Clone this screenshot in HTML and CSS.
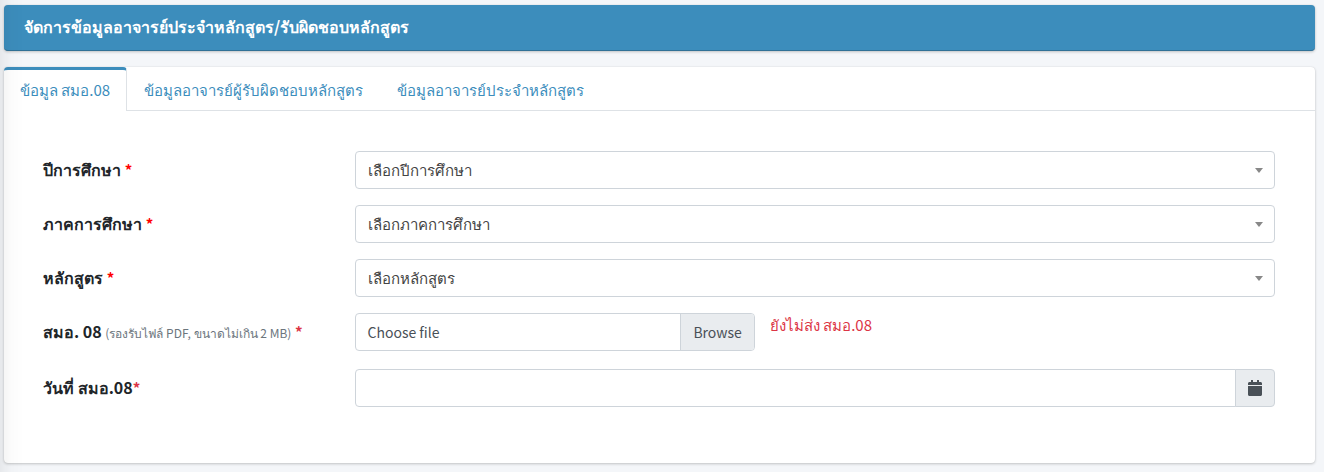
FILE: index.html
```html
<!DOCTYPE html>
<html lang="th">
<head>
	<meta charset="UTF-8">
	<title>จัดการข้อมูลอาจารย์ประจำหลักสูตร</title>
	<link rel="stylesheet" href="styles.css">
</head>
<body>
	<div class="wrapper">
		<header class="page-head">
			<h1>จัดการข้อมูลอาจารย์ประจำหลักสูตร/รับผิดชอบหลักสูตร</h1>
		</header>

		<main class="card">
			<nav class="tabs">
				<a href="#smo08" class="tab active">ข้อมูล สมอ.08</a>
				<a href="#owner" class="tab">ข้อมูลอาจารย์ผู้รับผิดชอบหลักสูตร</a>
				<a href="#teacher" class="tab">ข้อมูลอาจารย์ประจำหลักสูตร</a>
			</nav>

			<form class="card-body" id="smo08">
				<div class="row">
					<label class="col-label" for="year">ปีการศึกษา <span class="red">*</span></label>
					<div class="col-field">
						<select id="year" class="control">
							<option>เลือกปีการศึกษา</option>
						</select>
					</div>
				</div>
				<div class="row">
					<label class="col-label" for="term">ภาคการศึกษา <span class="red">*</span></label>
					<div class="col-field">
						<select id="term" class="control">
							<option>เลือกภาคการศึกษา</option>
						</select>
					</div>
				</div>
				<div class="row">
					<label class="col-label" for="course">หลักสูตร <span class="red">*</span></label>
					<div class="col-field">
						<select id="course" class="control">
							<option>เลือกหลักสูตร</option>
						</select>
					</div>
				</div>
				<div class="row row-file">
					<label class="col-label" for="file">สมอ. 08 <small>(รองรับไฟล์ PDF, ขนาดไม่เกิน 2 MB)</small> <span class="danger">*</span></label>
					<div class="col-file">
						<div class="custom-file">
							<input type="file" id="file" accept="application/pdf">
							<label class="file-label" for="file"><span class="file-name">Choose file</span><span class="browse">Browse</span></label>
						</div>
					</div>
					<div class="col-status danger">ยังไม่ส่ง สมอ.08</div>
				</div>
				<div class="row">
					<label class="col-label" for="date">วันที่ สมอ.08<span class="danger">*</span></label>
					<div class="col-field date-group">
						<input type="text" id="date" class="control">
						<button type="button" class="addon" aria-label="เลือกวันที่">
							<svg viewBox="0 0 448 512" width="14" height="16"><path fill="currentColor" d="M12 192h424c6.600 0 12 5.400 12 12v260c0 26.500-21.500 48-48 48H48c-26.500 0-48-21.500-48-48V204c0-6.600 5.400-12 12-12zm436-44v-36c0-26.500-21.500-48-48-48h-48V12c0-6.600-5.400-12-12-12h-40c-6.600 0-12 5.400-12 12v52H160V12c0-6.600-5.400-12-12-12h-40c-6.600 0-12 5.400-12 12v52H48C21.500 64 0 85.500 0 112v36c0 6.600 5.400 12 12 12h424c6.600 0 12-5.400 12-12z"/></svg>
						</button>
					</div>
				</div>
			</form>
		</main>
	</div>
</body>
</html>
```

FILE: styles.css
```css
* {box-sizing: border-box;}
body {margin: 0;background: #f4f6f9;color: #212529;font: 15px/24px "Noto Sans CJK SC", "Noto Sans", sans-serif;}
.wrapper {padding: 5px 9px 8px 4px;}
.wrapper::before {content: "";position: fixed;left: 0;top: 0;bottom: 0;width: 24px;background: linear-gradient(to right, rgba(0,0,0,.05), rgba(0,0,0,.01) 50%, rgba(0,0,0,0));pointer-events: none;z-index: 1;}

.page-head {background: #3c8dbc;color: #fff;border-bottom: 1px solid #307196;border-radius: 4px;box-shadow: 0 0 1px rgba(0,0,0,.13), 0 1px 3px rgba(0,0,0,.2);padding: 9px 20px 12px;margin-bottom: 16px;}
.page-head h1 {margin: 0;font-size: 16px;line-height: 24px;font-weight: 700;}

.card {background: #fff;border-radius: 4px;box-shadow: 0 0 1px rgba(0,0,0,.13), 0 1px 3px rgba(0,0,0,.2);}
.tabs {display: flex;border-bottom: 1px solid #dee2e6;}
.tab {color: #3c8dbc;text-decoration: none;padding: 8px 16px;border: 1px solid transparent;border-top-width: 3px;border-bottom: 0;margin-bottom: -1px;height: 44px;}
.tab.active {background: #fff;border-color: #3c8dbc #dee2e6 #fff transparent;border-left: 0;border-radius: 4px 4px 0 0;}

.card-body {padding: 40px 33px 56px 32px;}
.row {display: flex;margin-bottom: 16px;}
.row-file {margin-bottom: 18px;}
.row:last-child {margin-bottom: 0;}
.col-label {flex: 0 0 25%;padding: 6px 7px 0;font-size: 16px;font-weight: 700;}
.col-label small {font-size: 12px;font-weight: 400;color: #6c757d;}
.col-label span {font-size: 15px;}
.col-field {flex: 1;padding: 0 7px;}
.col-file {flex: 0 0 33.333%;padding: 0 8px 0 7px;}
.col-status {padding: 0 7px;}
.red {color: #f00;}
.danger {color: #dc3545;}

.control {display: block;width: 100%;height: 38px;padding: 6px 12px;border: 1px solid #ced4da;border-radius: 4px;background: #fff;color: #444;font: inherit;}
select.control {appearance: none;padding-right: 32px;background: #fff url("data:image/svg+xml,%3Csvg xmlns='http://www.w3.org/2000/svg' width='8' height='5'%3E%3Cpath fill='%23888' d='M0 0h8L4 5z'/%3E%3C/svg%3E") no-repeat right 11px center;}

.custom-file {position: relative;}
.custom-file input {position: absolute;width: 100%;height: 100%;opacity: 0;}
.file-label {display: flex;height: 38px;border: 1px solid #ced4da;border-radius: 4px;color: #495057;font-size: 14px;overflow: hidden;}
.file-name {flex: 1;padding: 6px 12px;}
.browse {padding: 6px 12px;background: #e9ecef;border-left: 1px solid #ced4da;}

.date-group {display: flex;}
.date-group .control {border-radius: 4px 0 0 4px;}
.addon {display: flex;align-items: center;justify-content: center;width: 40px;flex: none;margin-left: -1px;padding: 0;background: #e9ecef;border: 1px solid #ced4da;border-radius: 0 4px 4px 0;color: #495057;}
```
